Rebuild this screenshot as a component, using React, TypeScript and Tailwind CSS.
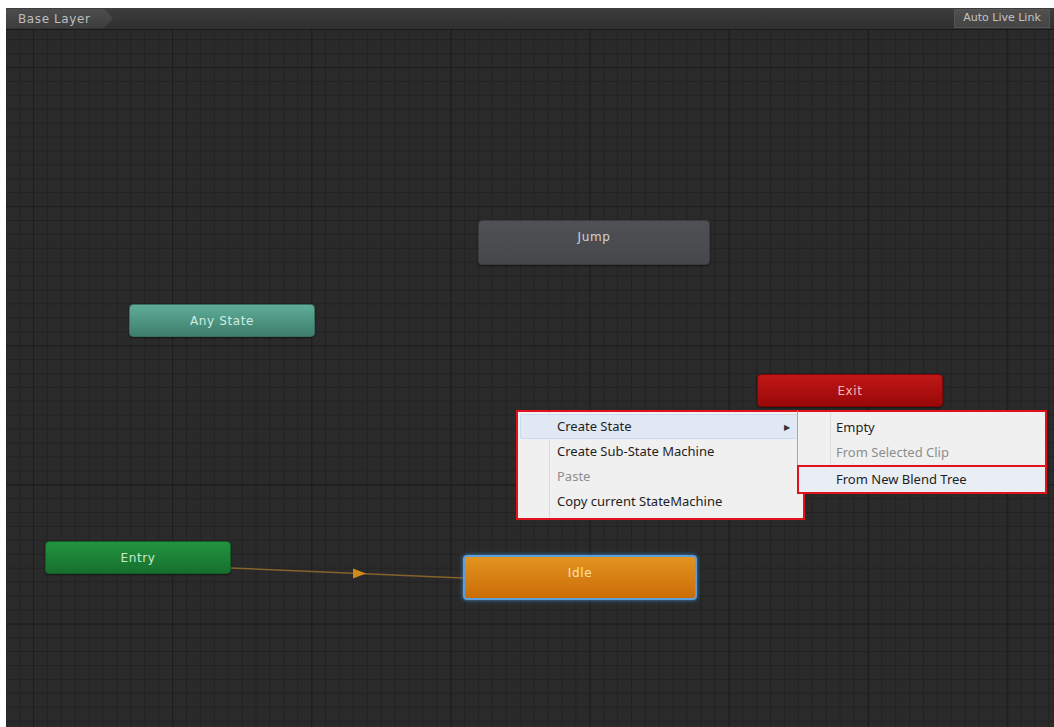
const nodeText = "font-['DejaVu_Sans',sans-serif] text-[12px] leading-[14px] tracking-[0.6px]";

const StateNode = ({ label, className }: { label: string; className: string }) => (
  <div className={`absolute flex justify-center pt-[9px] rounded-[4px] ${nodeText} ${className}`}>
    {label}
  </div>
);

const MenuItem = ({
  label,
  disabled,
  active,
  arrow,
}: {
  label: string;
  disabled?: boolean;
  active?: boolean;
  arrow?: boolean;
}) => (
  <div
    className={`flex items-center h-[25px] ${
      active ? 'mx-[2px] pl-[36px] pr-[10px] bg-[#dfe8f3] border border-[#cbdcef] rounded-[2px]' : 'pl-[39px] pr-[12px]'
    } ${disabled ? 'text-[#8d8d8d]' : 'text-[#1e1e1e]'}`}
  >
    <span className="flex-1">{label}</span>
    {arrow && <span className="text-[8px] text-[#333]">▶</span>}
  </div>
);

export default function App() {
  return (
    <div className="w-[1054px] h-[727px] bg-white pt-2 pl-1.5 overflow-hidden">
      <div className="flex flex-col h-full bg-[#2a2a2a]">
        {/* toolbar */}
        <div className="flex items-center justify-between h-[22px] bg-gradient-to-b from-[#3d3d3d] to-[#2f2f2f] border-b border-[#1a1a1a]">
          <div className="flex items-center h-[20px] w-[107px] pl-[12px] bg-gradient-to-b from-[#4d4d4d] to-[#3c3c3c] text-[#bdbdbd] font-['DejaVu_Sans',sans-serif] text-[12px] tracking-[0.6px] [clip-path:polygon(0_0,calc(100%-9px)_0,100%_50%,calc(100%-9px)_100%,0_100%)]">
            Base Layer
          </div>
          <div className="flex items-center justify-center h-[19px] w-[96px] mr-[4px] bg-gradient-to-b from-[#505050] to-[#444] border border-[#555] text-[#c4c4c4] font-['DejaVu_Sans',sans-serif] text-[11px]">
            Auto Live Link
          </div>
        </div>

        {/* graph canvas */}
        <div className="relative flex-1 overflow-hidden bg-[linear-gradient(to_right,#1d1d1d_1px,transparent_1px),linear-gradient(to_bottom,#1d1d1d_1px,transparent_1px),linear-gradient(to_right,#222_1px,transparent_1px),linear-gradient(to_bottom,#222_1px,transparent_1px)] bg-[size:139.2px_139.2px,139.2px_139.2px,13.92px_13.92px,13.92px_13.92px] bg-[position:27px_37px]">
          <svg className="absolute inset-0" width="1048" height="697">
            <line x1="225" y1="538" x2="457" y2="548" stroke="#85632a" strokeWidth="1.5" />
            <polygon points="347,538.5 360,543.5 347,548.5" fill="#d08a1c" />
          </svg>

          <StateNode
            label="Jump"
            className="left-[472px] top-[190px] w-[232px] h-[45px] bg-gradient-to-b from-[#505155] to-[#46474b] border border-[#3a3b3e] text-[#d2d2d2] shadow-[0_1px_2px_rgba(0,0,0,0.5)]"
          />
          <StateNode
            label="Any State"
            className="left-[123px] top-[274px] w-[186px] h-[33px] bg-gradient-to-b from-[#5fae99] to-[#3e7d6c] border border-[#3a6e60] text-[#cdeee3] shadow-[0_1px_2px_rgba(0,0,0,0.5)]"
          />
          <StateNode
            label="Exit"
            className="left-[751px] top-[344px] w-[186px] h-[33px] bg-gradient-to-b from-[#bf1717] to-[#9a0808] border border-[#7e0606] text-[#f3b7b7] shadow-[0_1px_2px_rgba(0,0,0,0.5)]"
          />
          <StateNode
            label="Entry"
            className="left-[39px] top-[511px] w-[186px] h-[33px] bg-gradient-to-b from-[#22933f] to-[#16702d] border border-[#125e26] text-[#cdeccf] shadow-[0_1px_2px_rgba(0,0,0,0.5)]"
          />
          <StateNode
            label="Idle"
            className="left-[457px] top-[525px] w-[234px] h-[45px] bg-gradient-to-b from-[#e3941f] to-[#ca6c06] border-2 border-[#5d9fdc] text-[#fbe0b6] shadow-[0_0_4px_#3d86c8]"
          />

          {/* context menu */}
          <div className="absolute left-[510px] top-[380px] w-[289px] h-[110px] py-[2px] bg-[#f0f0f0] border-2 border-[#e0131c] font-['Noto_Sans',sans-serif] text-[13px]">
            <div className="absolute left-[31px] top-0 bottom-0 w-px bg-[#dcdcdc]" />
            <div className="relative">
              <MenuItem label="Create State" active arrow />
              <MenuItem label="Create Sub-State Machine" />
              <MenuItem label="Paste" disabled />
              <MenuItem label="Copy current StateMachine" />
            </div>
          </div>

          {/* sub menu */}
          <div className="absolute left-[791px] top-[380px] w-[250px] flex flex-col pt-[3px] bg-[#f0f0f0] border-t-2 border-r-2 border-l border-t-[#e0131c] border-r-[#e0131c] border-l-[#a9a9a9] font-['Noto_Sans',sans-serif] text-[13px]">
            <div className="absolute left-[32px] top-0 bottom-0 w-px bg-[#dcdcdc]" />
            <div className="relative flex items-center h-[25px] pl-[38px] text-[#1e1e1e]">Empty</div>
            <div className="relative flex items-center h-[25px] pl-[38px] text-[#8d8d8d]">From Selected Clip</div>
            <div className="relative flex items-center h-[29px] -ml-px -mr-[2px] pl-[37px] bg-[#e9eef4] border-2 border-[#e0131c] text-[#1e1e1e]">
              From New Blend Tree
            </div>
          </div>
        </div>
      </div>
    </div>
  );
}
